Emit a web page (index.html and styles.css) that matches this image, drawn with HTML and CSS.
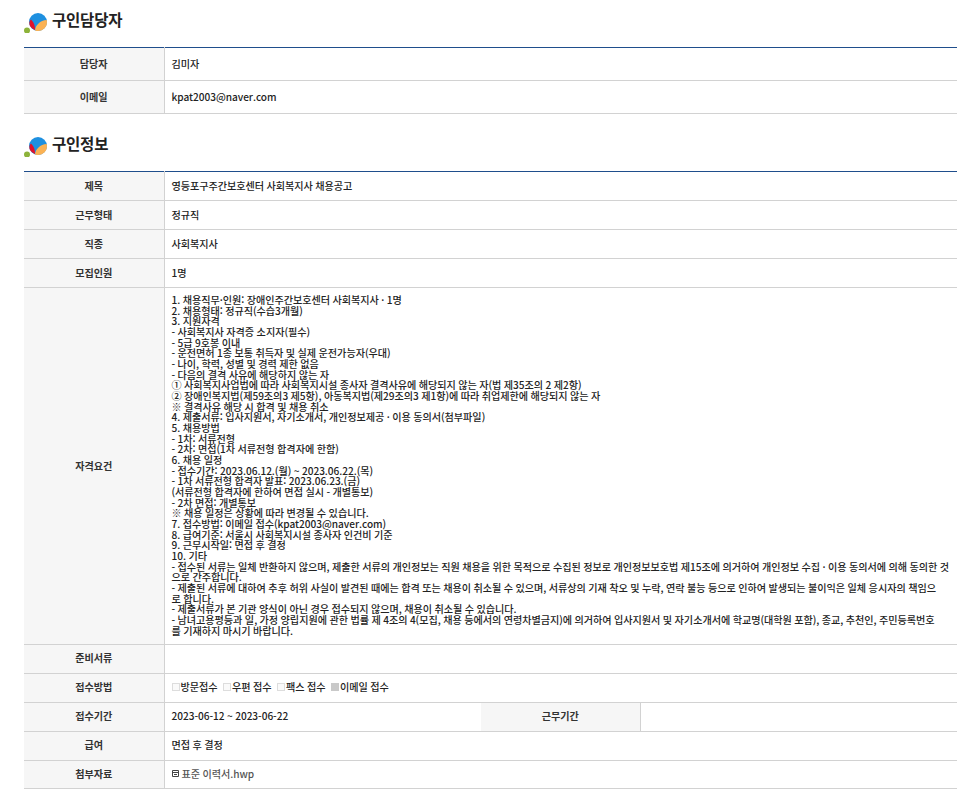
FILE: index.html
```html
<!DOCTYPE html>
<html lang="ko">
<head>
<meta charset="utf-8">
<title>구인정보</title>
<link rel="stylesheet" href="styles.css">
</head>
<body>
<main class="page">
  <section class="section">
    <h2 class="title">
      <svg class="logo" width="28" height="24" viewBox="0 0 28 24"><circle cx="3" cy="21.500" r="3" fill="#8db33a"/><circle cx="14" cy="13" r="9" fill="#1e90e0"/><path d="M22.800 11 A9 9 0 0 1 11 21.500 C11.500 16 16 11.500 22.800 11Z" fill="#fbb254"/><path d="M7 10.500 C5.200 12 4.900 15 6 17 C7 18.800 9 20 11 21 C11.200 17 10 13 7 10.500Z" fill="#e0112b"/></svg>
      구인담당자
    </h2>
    <table class="info short">
      <colgroup><col class="c1"><col></colgroup>
      <tr><th>담당자</th><td>김미자</td></tr>
      <tr><th>이메일</th><td>kpat2003@naver.com</td></tr>
    </table>
  </section>
  <section class="section second">
    <h2 class="title">
      <svg class="logo" width="28" height="24" viewBox="0 0 28 24"><circle cx="3" cy="21.500" r="3" fill="#8db33a"/><circle cx="14" cy="13" r="9" fill="#1e90e0"/><path d="M22.800 11 A9 9 0 0 1 11 21.500 C11.500 16 16 11.500 22.800 11Z" fill="#fbb254"/><path d="M7 10.500 C5.200 12 4.900 15 6 17 C7 18.800 9 20 11 21 C11.200 17 10 13 7 10.500Z" fill="#e0112b"/></svg>
      구인정보
    </h2>
    <table class="info">
      <colgroup><col class="c1"><col class="c2"><col class="c3"><col></colgroup>
      <tr><th>제목</th><td colspan="3">영등포구주간보호센터 사회복지사 채용공고</td></tr>
      <tr><th>근무형태</th><td colspan="3">정규직</td></tr>
      <tr><th>직종</th><td colspan="3">사회복지사</td></tr>
      <tr><th>모집인원</th><td colspan="3">1명</td></tr>
      <tr><th class="tall">자격요건</th><td colspan="3" class="body-text">1. 채용직무·인원: 장애인주간보호센터 사회복지사 · 1명<br>
2. 채용형태: 정규직(수습3개월)<br>
3. 지원자격<br>
- 사회복지사 자격증 소지자(필수)<br>
- 5급 9호봉 이내<br>
- 운전면허 1종 보통 취득자 및 실제 운전가능자(우대)<br>
- 나이, 학력, 성별 및 경력 제한 없음<br>
- 다음의 결격 사유에 해당하지 않는 자<br>
① 사회복지사업법에 따라 사회복지시설 종사자 결격사유에 해당되지 않는 자(법 제35조의 2 제2항)<br>
② 장애인복지법(제59조의3 제5항), 아동복지법(제29조의3 제1항)에 따라 취업제한에 해당되지 않는 자<br>
※ 결격사유 해당 시 합격 및 채용 취소<br>
4. 제출서류: 입사지원서, 자기소개서, 개인정보제공 · 이용 동의서(첨부파일)<br>
5. 채용방법<br>
- 1차: 서류전형<br>
- 2차: 면접(1차 서류전형 합격자에 한함)<br>
6. 채용 일정<br>
- 접수기간: 2023.06.12.(월) ~ 2023.06.22.(목)<br>
- 1차 서류전형 합격자 발표: 2023.06.23.(금)<br>
(서류전형 합격자에 한하여 면접 실시 - 개별통보)<br>
- 2차 면접: 개별통보<br>
※ 채용 일정은 상황에 따라 변경될 수 있습니다.<br>
7. 접수방법: 이메일 접수(kpat2003@naver.com)<br>
8. 급여기준: 서울시 사회복지시설 종사자 인건비 기준<br>
9. 근무시작일: 면접 후 결정<br>
10. 기타<br>
- 접수된 서류는 일체 반환하지 않으며, 제출한 서류의 개인정보는 직원 채용을 위한 목적으로 수집된 정보로 개인정보보호법 제15조에 의거하여 개인정보 수집 · 이용 동의서에 의해 동의한 것<br>으로 간주합니다.<br>
- 제출된 서류에 대하여 추후 허위 사실이 발견된 때에는 합격 또는 채용이 취소될 수 있으며, 서류상의 기재 착오 및 누락, 연락 불능 등으로 인하여 발생되는 불이익은 일체 응시자의 책임으<br>로 합니다.<br>
- 제출서류가 본 기관 양식이 아닌 경우 접수되지 않으며, 채용이 취소될 수 있습니다.<br>
- 남녀고용평등과 일, 가정 양립지원에 관한 법률 제 4조의 4(모집, 채용 등에서의 연령차별금지)에 의거하여 입사지원서 및 자기소개서에 학교명(대학원 포함), 종교, 추천인, 주민등록번호<br>를 기재하지 마시기 바랍니다.</td></tr>
      <tr><th>준비서류</th><td colspan="3"></td></tr>
      <tr><th>접수방법</th><td colspan="3">
        <span class="methods">
          <span class="method"><span class="box"></span>방문접수</span>
          <span class="method"><span class="box"></span>우편 접수</span>
          <span class="method"><span class="box"></span>팩스 접수</span>
          <span class="method"><span class="box checked"></span>이메일 접수</span>
        </span>
      </td></tr>
      <tr><th>접수기간</th><td>2023-06-12 ~ 2023-06-22</td><th>근무기간</th><td></td></tr>
      <tr><th>급여</th><td colspan="3">면접 후 결정</td></tr>
      <tr class="last"><th>첨부자료</th><td colspan="3">
        <span class="file">
          <svg class="file-icon" width="7" height="7" viewBox="0 0 7 7"><path d="M.5.500h6v6h-6zM.5 2.500h6M2 4.500h3" fill="none" stroke="#444" stroke-width="1"/></svg>
          표준 이력서.hwp
        </span>
      </td></tr>
    </table>
  </section>
</main>
</body>
</html>
```
FILE: styles.css
```css
* { box-sizing: border-box; }
html, body { margin: 0; padding: 0; background: #fff; }
body { font-family: "Noto Sans CJK KR", "Noto Sans", sans-serif; color: #333; }
.page { padding: 0 17px 0 24px; }
.title {
  display: flex;
  align-items: center;
  margin: 0;
  height: 47px;
  padding-bottom: 9px;
  font-size: 15.5px;
  font-weight: 700;
  color: #222;
  letter-spacing: -.2px;
}
.logo { flex: none; margin-top: 3px; }
.second { margin-top: 10px; }
.info {
  width: 100%;
  table-layout: fixed;
  border-collapse: collapse;
  border-top: 1px solid #1f4e8c;
  font-size: 10.1px;
  line-height: 11px;
  letter-spacing: -.03px;
  word-spacing: -.3px;
}
.c1 { width: 140px; }
.c2 { width: 317px; }
.c3 { width: 159px; }
.info tr { height: 29px; }
.info .last { height: 28px; }
.short tr { height: 33px; }
.info th, .info td { border-bottom: 1px solid #d2d2d2; padding: 0 7px 2px; vertical-align: middle; }
.info th { background: #f6f6f6; border-right: 1px solid #d2d2d2; font-weight: 700; text-align: center; color: #333; }
.info th.tall { padding-bottom: 0; }
.info td { font-weight: 500; color: #222; }
.info .body-text { padding: 7px 2px 7px 7px; line-height: 10.67px; }
.methods { display: flex; gap: 5.5px; }
.method { display: inline-flex; align-items: center; gap: 1px; }
.box { width: 8px; height: 8px; border: 1px solid #ddd; background: #fafafa; }
.box.checked { background: #c9c9c9; border-color: #c9c9c9; }
.file { display: inline-flex; align-items: center; gap: 3px; color: #555; }
.file-icon { flex: none; }
```
